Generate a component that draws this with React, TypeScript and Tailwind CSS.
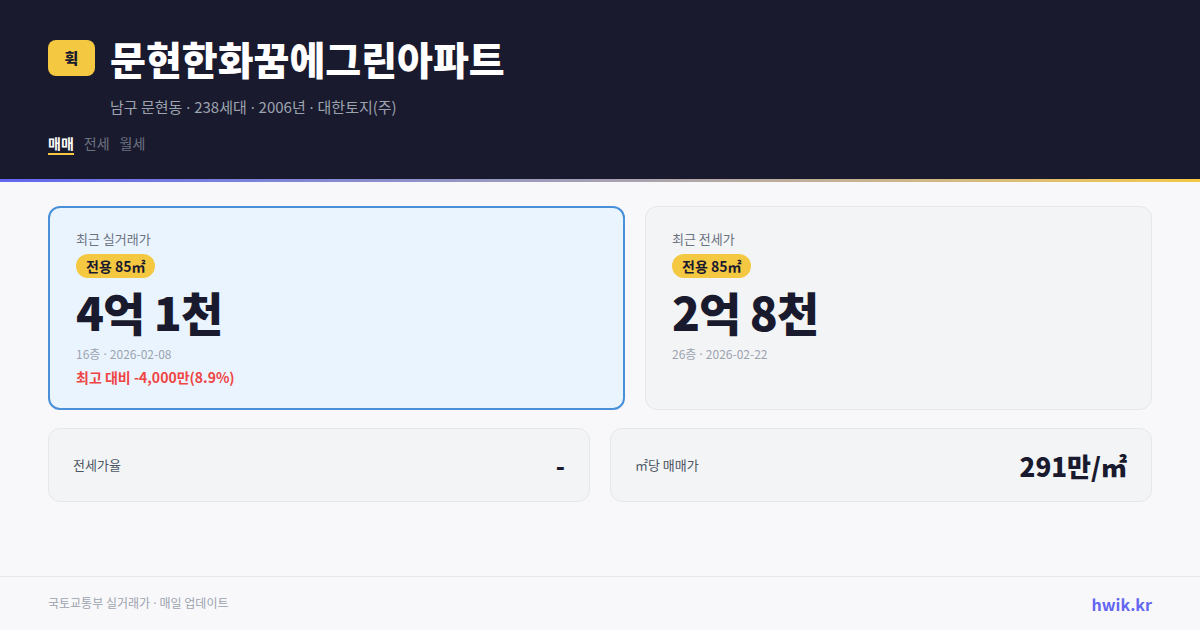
import React from "react";

const font = { fontFamily: '"Noto Sans CJK KR", "Noto Sans", sans-serif' };

function Dot() {
  return <span className="font-['Noto_Sans']"> · </span>;
}

export default function App() {
  return (
    <div className="w-[1200px] h-[630px] flex flex-col bg-[#f8f8fa] overflow-hidden" style={font}>
      <header className="bg-[#1a1a2e] px-12 pt-9 pb-6">
        <div className="flex items-center gap-[15px]">
          <div className="w-[47px] h-[36px] rounded-lg bg-[#f5c842] flex items-center justify-center text-[15px] font-extrabold text-[#1a1a2e]">
            휙
          </div>
          <h1 className="text-[39px] leading-[44px] font-black text-white">문현한화꿈에그린아파트</h1>
        </div>
        <div className="ml-[62px] mt-[17px] text-[15px] leading-[20px] text-[#9ca3af]">
          남구 문현동<Dot />238세대<Dot />2006년<Dot />대한토지(주)
        </div>
        <div className="mt-4 flex gap-[10px] text-[14px] leading-[20px]">
          <span className="font-bold text-white border-b-2 border-[#f5c842]">매매</span>
          <span className="text-[#6b7280]">전세</span>
          <span className="text-[#6b7280]">월세</span>
        </div>
      </header>
      <div className="h-[3px] bg-gradient-to-r from-[#6366f1] to-[#f5c842]" />
      <main className="flex-1 px-12 pt-6">
        <div className="grid grid-cols-[577px_1fr] gap-5">
          <div className="h-[204px] rounded-xl border-2 border-[#4a90d9] bg-[#eaf4ff] px-[26px] pt-[22px]">
            <div className="text-[13px] leading-[18px] text-[#6b7280]">최근 실거래가</div>
            <div className="mt-[6px] inline-flex h-[24px] items-center rounded-full bg-[#f5c842] px-[10px] text-[14px] font-bold text-[#1a1a2e]">전용 85㎡</div>
            <div className="mt-[10px] text-[46px] leading-none font-black text-[#1a1a2e] tracking-[-1px]">4억 1천</div>
            <div className="mt-[12px] text-[12px] leading-[16px] text-[#9ca3af]">16층<Dot />2026-02-08</div>
            <div className="mt-[4px] text-[14px] leading-[20px] font-semibold text-[#ef4444]">최고 대비 -4,000만(8.9%)</div>
          </div>
          <div className="h-[204px] rounded-xl border border-[#e5e7eb] bg-[#f3f4f6] px-[26px] pt-[23px]">
            <div className="text-[13px] leading-[18px] text-[#6b7280]">최근 전세가</div>
            <div className="mt-[6px] inline-flex h-[24px] items-center rounded-full bg-[#f5c842] px-[10px] text-[14px] font-bold text-[#1a1a2e]">전용 85㎡</div>
            <div className="mt-[10px] text-[46px] leading-none font-black text-[#1a1a2e] tracking-[-1px]">2억 8천</div>
            <div className="mt-[12px] text-[12px] leading-[16px] text-[#9ca3af]">26층<Dot />2026-02-22</div>
          </div>
        </div>
        <div className="mt-[18px] grid grid-cols-2 gap-5">
          <div className="h-[74px] rounded-xl border border-[#e5e7eb] bg-[#f3f4f6] px-6 flex items-center justify-between">
            <span className="text-[13px] text-[#4b5563]">전세가율</span>
            <span className="text-[24px] font-extrabold text-[#1a1a2e]">-</span>
          </div>
          <div className="h-[74px] rounded-xl border border-[#e5e7eb] bg-[#f3f4f6] px-6 flex items-center justify-between">
            <span className="text-[13px] text-[#4b5563]">㎡당 매매가</span>
            <span className="text-[26px] font-extrabold text-[#1a1a2e]">291만/㎡</span>
          </div>
        </div>
      </main>
      <footer className="h-[54px] border-t border-[#e5e7eb] px-12 flex items-center justify-between">
        <span className="text-[12px] text-[#9ca3af]">국토교통부 실거래가<Dot />매일 업데이트</span>
        <span className="text-[16px] font-bold text-[#6366f1]">hwik.kr</span>
      </footer>
    </div>
  );
}
